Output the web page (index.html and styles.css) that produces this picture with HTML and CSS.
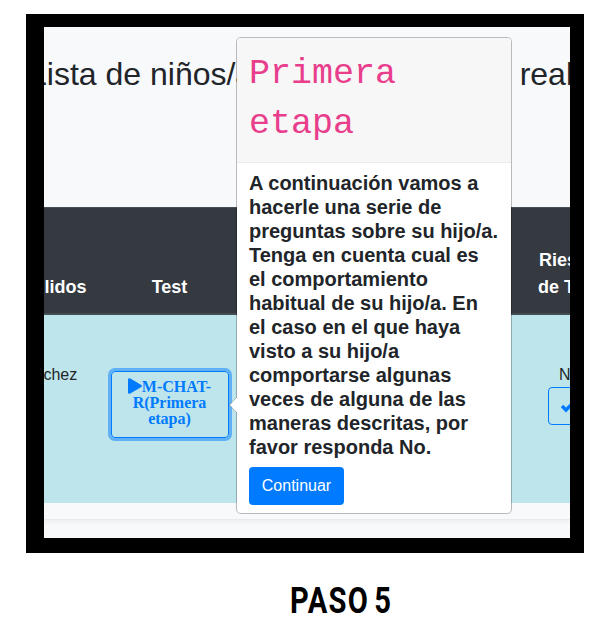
FILE: index.html
```
<!DOCTYPE html>
<html lang="es">
<head>
<meta charset="utf-8">
<title>Paso 5</title>
<link rel="stylesheet" href="styles.css">
</head>
<body>
<figure class="step">
  <div class="frame">
    <h2 class="title"><span class="title-start">Lista de niños/a</span><span class="title-end">a real</span></h2>
    <div class="table">
      <div class="row head">
        <div class="cell surname">lidos</div>
        <div class="cell test">Test</div>
        <div class="cell risk"><span>Ries</span><br>de T</div>
      </div>
      <div class="row body">
        <div class="cell surname">chez</div>
        <div class="cell test">
          <button class="test-button"><svg class="play" viewBox="0 0 14 16"><path d="M0 1.6C0 .3 1.2-.2 2.300.4L13.300 6.900C14.200 7.400 14.200 8.600 13.300 9.100L2.300 15.600C1.200 16.200 0 15.700 0 14.400Z"/></svg>M-CHAT-<br>R(Primera<br>etapa)</button>
        </div>
        <div class="cell risk">N<div class="check-button"><svg viewBox="0 0 16 12"><path d="M2 4L6 8L14 0" /></svg></div></div>
      </div>
    </div>
    <div class="card-end"></div>
    <div class="popover">
      <h3 class="popover-header"><code>Primera<br>etapa</code></h3>
      <div class="popover-body">
        <p>A continuación vamos a<br>hacerle una serie de<br>preguntas sobre su hijo/a.<br>Tenga en cuenta cual es<br>el comportamiento<br>habitual de su hijo/a. En<br>el caso en el que haya<br>visto a su hijo/a<br>comportarse algunas<br>veces de alguna de las<br>maneras descritas, por<br>favor responda No.</p>
        <button class="continue">Continuar</button>
      </div>
      <svg class="arrow" viewBox="0 0 8 16"><path class="arrow-fill" d="M8 0L.5 8L8 16Z"/><path class="arrow-line" d="M8 0L.5 8L8 16"/></svg>
    </div>
  </div>
  <figcaption><span>PASO 5</span></figcaption>
</figure>
</body>
</html>
```
FILE: styles.css
```
* { box-sizing: border-box; }
body {
  margin: 0;
  background: #fff;
  color: #212529;
  font: 16px/24px "Liberation Sans", Arial, sans-serif;
}
.step { margin: 0; padding: 14px 0 0 26px; height: 626px; overflow: hidden; }
.frame {
  position: relative;
  width: 558px;
  height: 539px;
  border: solid #000;
  border-width: 13px 14px 15px 18px;
  background: #f8f9fb;
  overflow: hidden;
}
.title {
  display: flex;
  justify-content: space-between;
  margin: 0 -3px 0 -15px;
  padding-top: 28px;
  height: 180px;
  font-size: 32px;
  line-height: 38px;
  font-weight: 400;
  white-space: nowrap;
}
.title-end { word-spacing: 1px; }
.row { display: grid; grid-template-columns: 65px 121px 1fr; }
.head {
  height: 108px;
  background: #343a40;
  border-top: 1px solid #454d55;
  border-bottom: 2px solid #454d55;
  color: #fff;
  font-size: 18px;
  line-height: 27px;
  font-weight: 700;
  align-items: end;
  padding-bottom: 12px;
}
.body { height: 188px; background: #bee5eb; padding-top: 48px; }
.surname { margin-left: -.6px; }
.head .surname { padding-left: 1px; }
.test { text-align: center; }
.head .risk { padding-left: 308px; white-space: nowrap; }
.head .risk span { padding-left: 1px; }
.body .risk { padding-left: 329px; }
.test-button {
  display: block;
  width: 118px;
  height: 67px;
  margin: 8px 0 0 1.5px;
  padding: 0 0 5px;
  border: 1px solid #007bff;
  border-radius: 4px;
  background: transparent;
  box-shadow: 0 0 0 3px rgba(0, 123, 255, .5);
  color: #007bff;
  font: 700 16px/16px "Liberation Serif", serif;
}
.play { width: 14px; height: 16px; vertical-align: -2px; fill: #007bff; }
.check-button {
  width: 42px;
  height: 38px;
  margin-left: -11px;
  padding: 14px 0 0 11px;
  border: 1px solid #007bff;
  border-radius: 4px;
}
.check-button svg { display: block; width: 16px; height: 12px; fill: none; stroke: #007bff; stroke-width: 3.4; overflow: visible; }
.card-end { height: 17px; border-bottom: 1px solid #e9eaed; box-shadow: 0 2px 4px rgba(0, 0, 0, .05); }
.popover {
  position: absolute;
  left: 192px;
  top: 10px;
  width: 276px;
  height: 477px;
  border: 1px solid rgba(0, 0, 0, .25);
  background-clip: padding-box;
  border-radius: 5px;
  background-color: #fff;
}
.popover-header {
  height: 125px;
  margin: 0;
  padding: 11px 12px 7px;
  border-bottom: 1px solid #ebebeb;
  border-radius: 4px 4px 0 0;
  background: #f7f7f7;
  font-weight: 400;
  line-height: 50px;
}
.popover-header code { display: block; color: #e83e8c; font: 35px/50px "Liberation Mono", monospace; }
.popover-body { padding: 8px 12px; }
.popover-body p { margin: 0 0 8px; font-size: 20px; line-height: 24px; font-weight: 700; white-space: nowrap; }
.continue {
  display: block;
  width: 95px;
  height: 38px;
  padding: 0;
  border: 0;
  border-radius: 4px;
  background: #007bff;
  color: #fff;
  font: 16px/24px "Liberation Sans", Arial, sans-serif;
}
.arrow { position: absolute; left: -8px; top: 359px; width: 8px; height: 16px; }
.arrow-fill { fill: #fff; }
.arrow-line { fill: none; stroke: rgba(0, 0, 0, .25); }
figcaption { padding: 27px 0 0 264px; color: #000; font: 700 36px/42px Roboto, sans-serif; white-space: nowrap; }
figcaption span { display: inline-block; letter-spacing: 1.5px; word-spacing: -4px; transform: scaleX(.81); transform-origin: left; }
```
